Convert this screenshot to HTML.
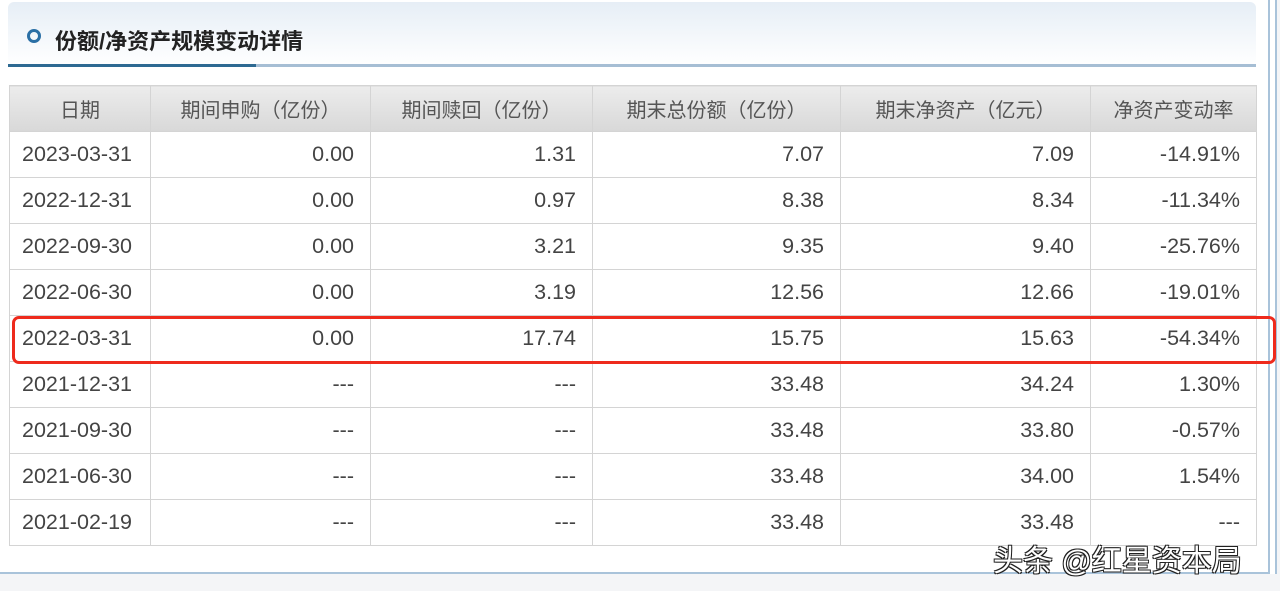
<!DOCTYPE html>
<html><head><meta charset="utf-8"><style>
body{margin:0;width:1280px;height:591px;background:#f4f5f7;position:relative;overflow:hidden;font-family:"Liberation Sans","Noto Sans CJK SC",sans-serif;}
.panel{position:absolute;left:0;top:0;width:1268px;height:572px;background:#fff;border-bottom:2px solid #a9c3da;}
.rb{position:absolute;left:1268px;top:0;width:5px;height:574px;background:#fff;border-left:2px solid #a9c3da;border-right:2px solid #a9c3da;}
.hd{position:absolute;left:8px;top:2px;width:1248px;height:64px;background:linear-gradient(#e6eef6,#fff);border-radius:6px 6px 0 0;}
.line{position:absolute;left:8px;top:64px;width:1248px;height:3px;background:#a6bed4;}
.line2{position:absolute;left:8px;top:64px;width:248px;height:3px;background:#2e6a92;}
.circ{position:absolute;left:27px;top:29px;width:8px;height:8px;border:3px solid #2a6fa5;border-radius:50%;}
.title{position:absolute;left:55px;top:29px;font-size:22px;font-weight:bold;color:#222;line-height:26px;}
table{position:absolute;left:9px;top:85px;border-collapse:collapse;width:1247px;table-layout:fixed;}
td,th{border:1px solid #d4d4d4;height:45px;padding:0 16px;font-size:21.5px;color:#444;font-weight:normal;white-space:nowrap;overflow:visible;}
th{background:linear-gradient(#ececec,#d8d8d8);text-align:center;color:#555;font-size:20px;padding:0;}
td{text-align:right;}
td:first-child{text-align:left;padding:0 0 0 12px;}
.red{position:absolute;left:12px;top:316px;width:1258px;height:42px;border:3px solid #ee2a1c;border-radius:7px;}
.wm{position:absolute;left:993px;top:536px;font-size:30px;color:#fff;text-shadow:1px 1px 0 #222,-1px -1px 0 #222,1px -1px 0 #222,-1px 1px 0 #222;}
</style></head><body>
<div class="panel"></div><div class="rb"></div>
<div class="hd"></div><div class="line"></div><div class="line2"></div>
<div class="circ"></div><div class="title">份额/净资产规模变动详情</div>
<table>
<colgroup><col style="width:141px"><col style="width:220px"><col style="width:222px"><col style="width:248px"><col style="width:250px"><col style="width:166px"></colgroup>
<tr><th>日期</th><th>期间申购（亿份）</th><th>期间赎回（亿份）</th><th>期末总份额（亿份）</th><th>期末净资产（亿元）</th><th>净资产变动率</th></tr>
<tr><td>2023-03-31</td><td>0.00</td><td>1.31</td><td>7.07</td><td>7.09</td><td>-14.91%</td></tr>
<tr><td>2022-12-31</td><td>0.00</td><td>0.97</td><td>8.38</td><td>8.34</td><td>-11.34%</td></tr>
<tr><td>2022-09-30</td><td>0.00</td><td>3.21</td><td>9.35</td><td>9.40</td><td>-25.76%</td></tr>
<tr><td>2022-06-30</td><td>0.00</td><td>3.19</td><td>12.56</td><td>12.66</td><td>-19.01%</td></tr>
<tr><td>2022-03-31</td><td>0.00</td><td>17.74</td><td>15.75</td><td>15.63</td><td>-54.34%</td></tr>
<tr><td>2021-12-31</td><td>---</td><td>---</td><td>33.48</td><td>34.24</td><td>1.30%</td></tr>
<tr><td>2021-09-30</td><td>---</td><td>---</td><td>33.48</td><td>33.80</td><td>-0.57%</td></tr>
<tr><td>2021-06-30</td><td>---</td><td>---</td><td>33.48</td><td>34.00</td><td>1.54%</td></tr>
<tr><td>2021-02-19</td><td>---</td><td>---</td><td>33.48</td><td>33.48</td><td>---</td></tr>
</table>
<div class="red"></div>
<div class="wm">头条 @红星资本局</div>
</body></html>
